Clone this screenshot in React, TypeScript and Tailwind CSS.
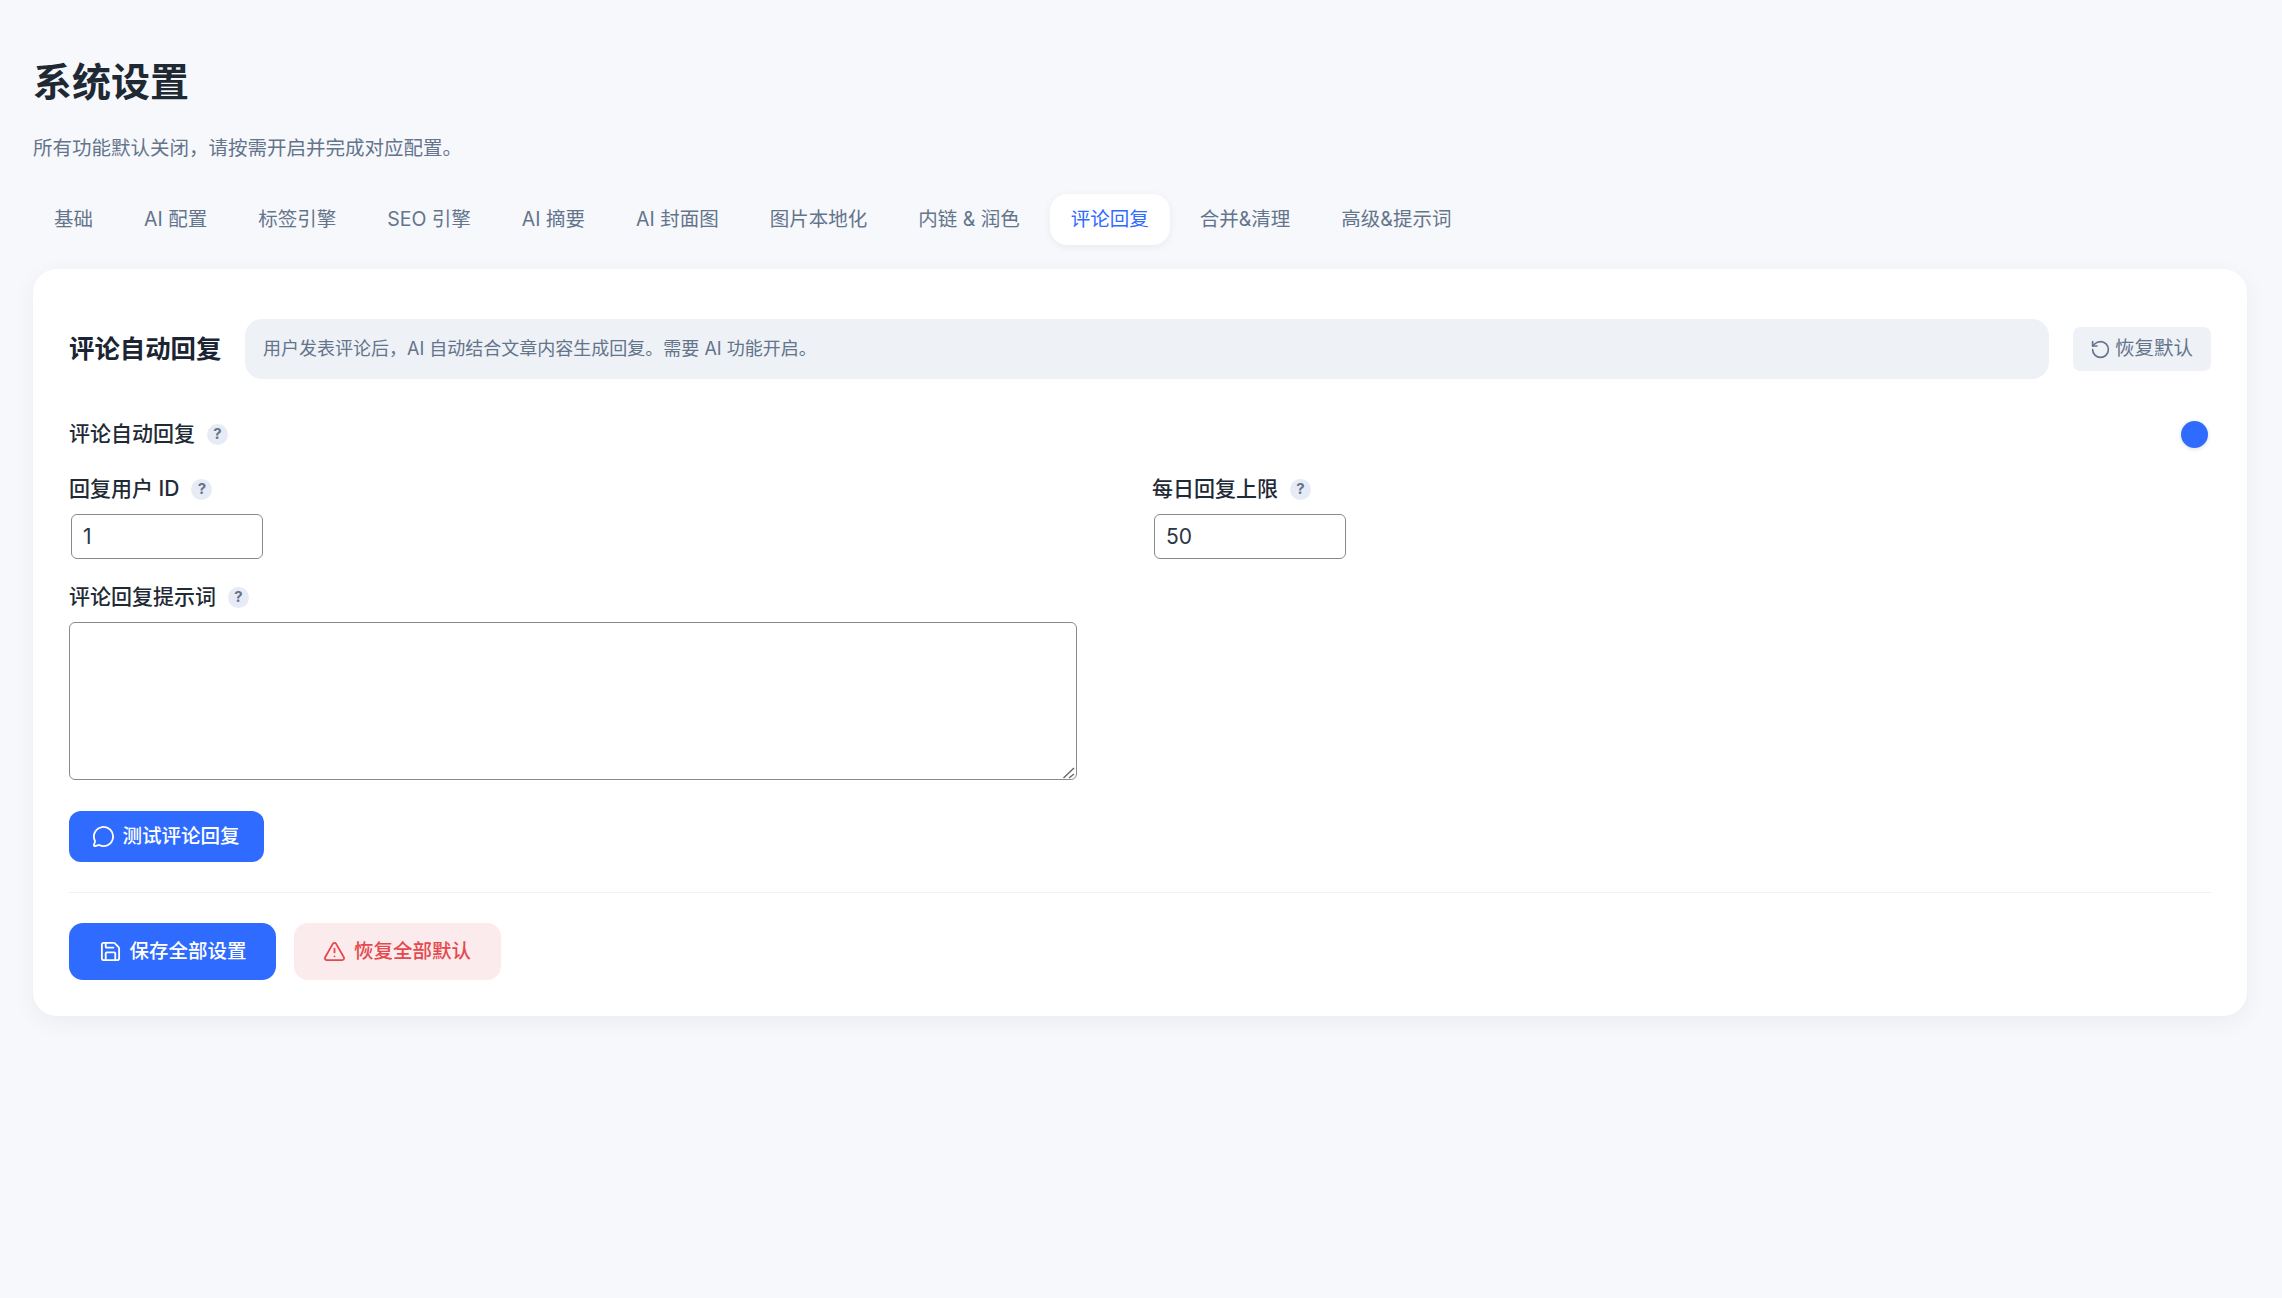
import { MessageCircle, RotateCcw, Save, TriangleAlert } from "lucide-react";

const tabs = [
  "基础",
  "AI 配置",
  "标签引擎",
  "SEO 引擎",
  "AI 摘要",
  "AI 封面图",
  "图片本地化",
  "内链 & 润色",
  "评论回复",
  "合并&清理",
  "高级&提示词",
];

function FieldLabel({ text }: { text: string }) {
  return (
    <div className="flex h-[28px] items-center gap-[12px] text-[21px] font-medium leading-[28px] text-[#1f2a37]">
      <span>{text}</span>
      <span className="flex h-[21px] w-[21px] items-center justify-center rounded-full bg-[#e6ebf5] text-[15px] font-bold text-[#64748b]">
        ?
      </span>
    </div>
  );
}

export default function App() {
  return (
    <div className="min-h-screen bg-[#f6f8fc] pl-[33px] pr-[35px] pt-[57px] font-['Inter','Noto_Sans_CJK_SC',sans-serif]">
      <h1 className="text-[39px] font-bold leading-[50px] text-[#1f2933]">系统设置</h1>
      <p className="mt-[27px] text-[19.5px] leading-[28px] text-[#64748b]">
        所有功能默认关闭，请按需开启并完成对应配置。
      </p>

      <div className="mt-[32px] flex gap-[9px]">
        {tabs.map((tab) =>
          tab === "评论回复" ? (
            <button
              key={tab}
              className="h-[51px] rounded-[17px] bg-white px-[21px] text-[19.5px] text-[#2f6bff] shadow-[0_2px_8px_rgba(15,23,42,0.06)]"
            >
              {tab}
            </button>
          ) : (
            <button key={tab} className="h-[51px] px-[21px] text-[19.5px] text-[#64748b]">
              {tab}
            </button>
          ),
        )}
      </div>

      <div className="mt-[24px] rounded-[24px] bg-white px-[36px] pb-[36px] pt-[50px] shadow-[0_6px_24px_rgba(15,23,42,0.05)]">
        <div className="flex items-center gap-[24px]">
          <h2 className="w-[152px] whitespace-nowrap text-[25.4px] font-semibold text-[#1a2433]">评论自动回复</h2>
          <div className="flex h-[60px] flex-1 items-center rounded-[17px] bg-[#eef1f6] px-[18px] pb-px text-[18px] text-[#64748b]">
            用户发表评论后，AI 自动结合文章内容生成回复。需要 AI 功能开启。
          </div>
          <button className="flex h-[44px] items-center gap-[4px] rounded-[7px] bg-[#eef1f6] pl-[17px] pr-[18px] text-[19.5px] text-[#64748b]">
            <RotateCcw size={21} strokeWidth={1.9} />
            恢复默认
          </button>
        </div>

        <div className="mt-[41px] flex items-center justify-between pr-[3px]">
          <FieldLabel text="评论自动回复" />
          <span className="h-[27px] w-[27px] rounded-full bg-[#2f6bff] shadow-[0_1px_4px_rgba(15,23,42,0.15)]" />
        </div>

        <div className="mt-[27px] grid grid-cols-2 gap-x-[24px]">
          <div>
            <FieldLabel text="回复用户 ID" />
            <input
              defaultValue="1"
              className="ml-[2px] mt-[11px] block h-[45px] w-[192px] rounded-[6px] border border-[#8a8a8a] pl-[11px] pr-[12px] text-[21px] text-[#2b3646]"
            />
          </div>
          <div>
            <FieldLabel text="每日回复上限" />
            <input
              defaultValue="50"
              className="ml-[2px] mt-[11px] block h-[45px] w-[192px] rounded-[6px] border border-[#8a8a8a] pl-[11px] pr-[12px] text-[21px] text-[#2b3646]"
            />
          </div>
        </div>

        <div className="mt-[24px]">
          <FieldLabel text="评论回复提示词" />
          <div className="relative mt-[11px] w-[1008px]">
            <textarea className="block h-[158px] w-full resize-none rounded-[6px] border border-[#8a8a8a]" />
            <svg
              className="pointer-events-none absolute bottom-[1px] right-[1px]"
              width="14"
              height="14"
              viewBox="0 0 14 14"
              fill="none"
              stroke="#666666"
              strokeWidth="1.4"
            >
              <path d="M1.5 13L12 3" />
              <path d="M7 13L12 9" />
            </svg>
          </div>
        </div>

        <button className="mt-[31px] flex h-[51px] items-center gap-[8px] rounded-[12px] bg-[#2f6bff] pl-[22.5px] pr-[24.5px] text-[19.5px] font-medium text-white">
          <MessageCircle size={23} strokeWidth={1.9} />
          测试评论回复
        </button>

        <div className="mt-[30px] h-px bg-[#f0f2f7]" />

        <div className="mt-[30px] flex gap-[18px]">
          <button className="flex h-[57px] items-center gap-[8px] rounded-[14px] bg-[#2f6bff] px-[29.5px] text-[19.5px] font-medium text-white">
            <Save size={23} strokeWidth={1.9} />
            保存全部设置
          </button>
          <button className="flex h-[57px] items-center gap-[8px] rounded-[14px] bg-[#fcebec] pl-[29px] pr-[30px] text-[19.5px] font-medium text-[#e5484d]">
            <TriangleAlert size={23} strokeWidth={1.9} />
            恢复全部默认
          </button>
        </div>
      </div>
    </div>
  );
}
